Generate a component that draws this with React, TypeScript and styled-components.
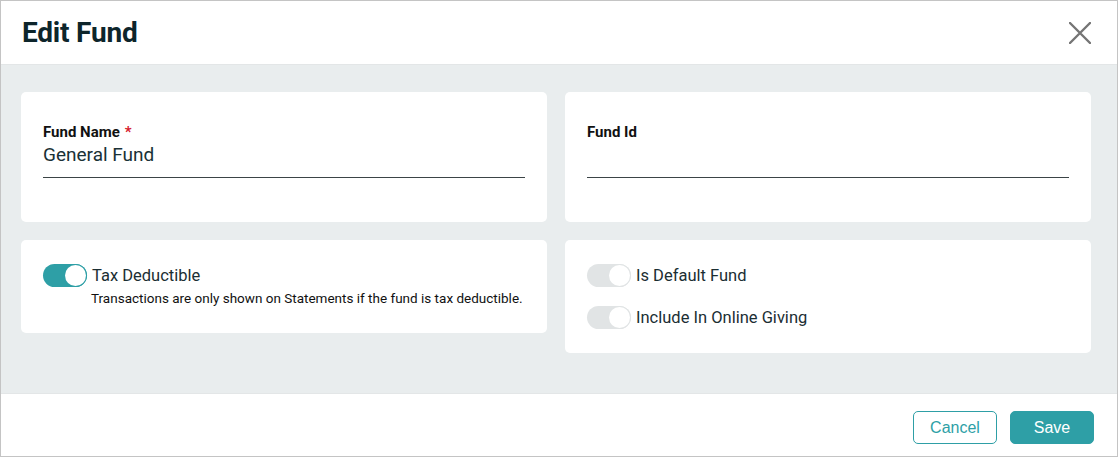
import React from "react";
import styled, { createGlobalStyle } from "styled-components";

const Global = createGlobalStyle`
  html, body { margin: 0; padding: 0; background: #fff; }
  body { font-family: Roboto, "Noto Sans", sans-serif; }
  * { box-sizing: border-box; }
`;

const Dialog = styled.div`
  width: 1118px;
  height: 457px;
  border: 1px solid #c4c4c4;
  display: flex;
  flex-direction: column;
  background: #fff;
`;

const Header = styled.div`
  height: 64px;
  display: flex;
  align-items: center;
  justify-content: space-between;
  padding: 0 24px 0 21px;
  border-bottom: 1px solid #e3e6e7;
`;

const Title = styled.h1`
  margin: 0;
  font-size: 28px;
  font-weight: 700;
  color: #0d252b;
  letter-spacing: -0.2px;
`;

const CloseButton = styled.button`
  border: 0;
  background: none;
  padding: 0;
  width: 26px;
  height: 26px;
  display: flex;
  align-items: center;
  justify-content: center;
  cursor: pointer;
`;

const Body = styled.div`
  flex: 1;
  background: #e9edee;
  padding: 27px 26px 0 20px;
  display: grid;
  grid-template-columns: 1fr 1fr;
  column-gap: 18px;
  row-gap: 18px;
  align-items: start;
  align-content: start;
`;

const Card = styled.div<{ $h: number; $pad?: string }>`
  background: #fff;
  border-radius: 5px;
  height: ${(p) => p.$h}px;
  padding: ${(p) => p.$pad ?? "0 22px"};
  display: flex;
  flex-direction: column;
`;

const Field = styled.div`
  padding-top: 31px;
  display: flex;
  flex-direction: column;
`;

const Label = styled.label`
  font-size: 15px;
  font-weight: 700;
  color: #111;
  line-height: 18px;
`;

const Req = styled.span`
  color: #d6202c;
  margin-left: 5px;
`;

const Input = styled.div`
  height: 37px;
  border-bottom: 1px solid #3b4446;
  font-size: 19px;
  color: #1a3136;
  line-height: 24px;
  padding-top: 2px;
`;

const ToggleRow = styled.div`
  display: flex;
  align-items: center;
  gap: 5px;
`;

const Track = styled.span<{ $on: boolean }>`
  width: 44px;
  height: 23px;
  border-radius: 12px;
  background: ${(p) => (p.$on ? "#2e9fa6" : "#e1e4e5")};
  position: relative;
  flex: none;
`;

const Thumb = styled.span<{ $on: boolean }>`
  position: absolute;
  top: 1px;
  right: 1px;
  width: 21px;
  height: 21px;
  border-radius: 50%;
  background: #fff;
  box-shadow: ${(p) => (p.$on ? "0 0 0 1px #2e9fa6" : "0 0 0 1px #e1e4e5")};
`;

const ToggleText = styled.span`
  font-size: 16.5px;
  color: #1b2e33;
`;

const Help = styled.div`
  font-size: 13.5px;
  color: #111;
  margin-left: 48px;
  margin-top: 3px;
`;

const ToggleStack = styled.div`
  display: flex;
  flex-direction: column;
  gap: 19px;
`;

const Footer = styled.div`
  height: 63px;
  display: flex;
  align-items: center;
  justify-content: flex-end;
  gap: 13px;
  padding: 5px 23px 0 0;
  border-top: 1px solid #e3e6e7;
`;

const Btn = styled.button<{ $primary?: boolean }>`
  width: 84px;
  height: 33px;
  border-radius: 5px;
  border: 1px solid #2e9fa6;
  background: ${(p) => (p.$primary ? "#2e9fa6" : "#fff")};
  color: ${(p) => (p.$primary ? "#fff" : "#2e9fa6")};
  font-family: "Liberation Sans", Arial, sans-serif;
  font-size: 16px;
  font-weight: 400;
  cursor: pointer;
`;

const Toggle = ({ on, label }: { on: boolean; label: string }) => (
  <ToggleRow>
    <Track $on={on}>
      <Thumb $on={on} />
    </Track>
    <ToggleText>{label}</ToggleText>
  </ToggleRow>
);

export default function App() {
  return (
    <>
      <Global />
      <Dialog>
        <Header>
          <Title>Edit Fund</Title>
          <CloseButton aria-label="Close">
            <svg width="22" height="22" viewBox="0 0 22 22">
              <path d="M1 1L21 21M21 1L1 21" stroke="#757575" strokeWidth="2.4" strokeLinecap="round" />
            </svg>
          </CloseButton>
        </Header>
        <Body>
          <Card $h={130}>
            <Field>
              <Label>
                Fund Name<Req>*</Req>
              </Label>
              <Input>General Fund</Input>
            </Field>
          </Card>
          <Card $h={130}>
            <Field>
              <Label>Fund Id</Label>
              <Input />
            </Field>
          </Card>
          <Card $h={93} $pad="24px 22px 0">
            <Toggle on label="Tax Deductible" />
            <Help>Transactions are only shown on Statements if the fund is tax deductible.</Help>
          </Card>
          <Card $h={113} $pad="24px 22px 0">
            <ToggleStack>
              <Toggle on={false} label="Is Default Fund" />
              <Toggle on={false} label="Include In Online Giving" />
            </ToggleStack>
          </Card>
        </Body>
        <Footer>
          <Btn>Cancel</Btn>
          <Btn $primary>Save</Btn>
        </Footer>
      </Dialog>
    </>
  );
}
